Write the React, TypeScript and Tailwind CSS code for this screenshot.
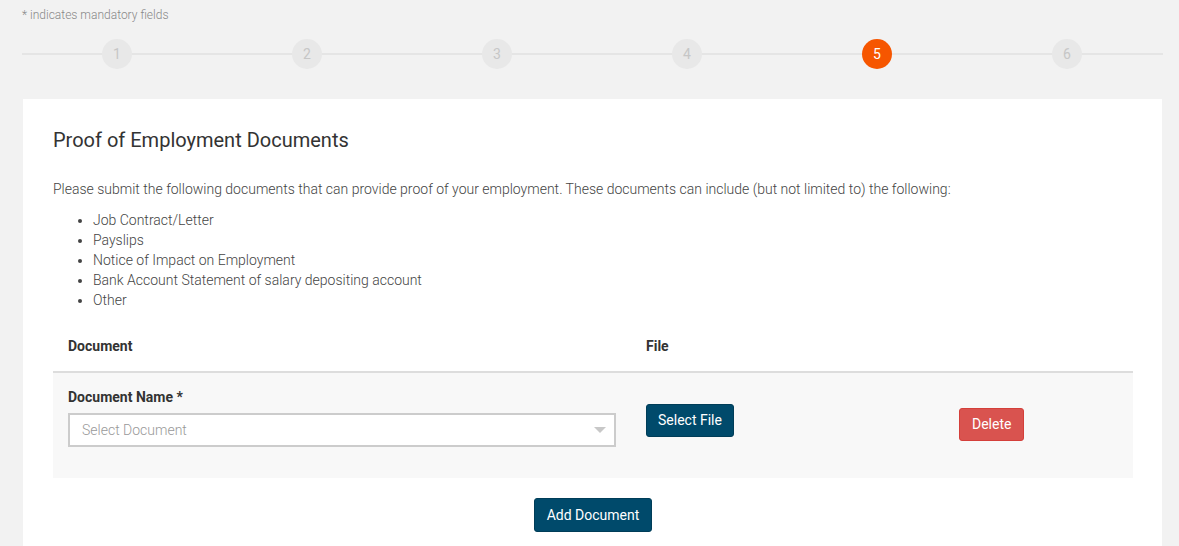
import React from "react";

const steps = [1, 2, 3, 4, 5, 6];
const items = [
  "Job Contract/Letter",
  "Payslips",
  "Notice of Impact on Employment",
  "Bank Account Statement of salary depositing account",
  "Other",
];

export default function App() {
  return (
    <div
      className="min-h-[546px] bg-[#f2f2f2] px-[22px] pt-[7px] text-[#555]"
      style={{ fontFamily: "Roboto, 'Noto Sans', sans-serif" }}
    >
      <div className="text-[12px] leading-[16px] text-[#888] font-light">* indicates mandatory fields</div>

      {/* stepper */}
      <div className="relative mt-[16px] h-[30px] w-[1141px]">
        <div className="absolute left-0 right-0 top-[14px] h-[2px] bg-[#e5e5e5]" />
        <div className="relative flex">
          {steps.map((s) => (
            <div key={s} className="flex w-[190px] justify-center">
              <div
                className={
                  s === 5
                    ? "flex h-[30px] w-[30px] items-center justify-center rounded-full bg-[#f65600] text-[14px] text-white"
                    : "flex h-[30px] w-[30px] items-center justify-center rounded-full bg-[#e8e8e8] text-[14px] text-[#c6c6c6]"
                }
              >
                {s}
              </div>
            </div>
          ))}
        </div>
      </div>

      {/* card */}
      <div className="ml-px mt-[30px] w-[1139px] bg-white px-[30px] pt-[29px] pb-[14px]">
        <h2 className="text-[20px] leading-[24px] text-[#333]">Proof of Employment Documents</h2>
        <p className="mt-[27px] text-[14px] leading-[20px] font-light text-[#444]">
          Please submit the following documents that can provide proof of your employment. These documents can include (but not limited to) the following:
        </p>
        <ul className="mt-[11px] list-disc pl-[40px] text-[14px] leading-[20px] font-light text-[#444]">
          {items.map((i) => (
            <li key={i}>{i}</li>
          ))}
        </ul>

        {/* table */}
        <div className="mt-[11px] w-[1080px] text-[14px]">
          <div className="flex border-b-2 border-[#ddd] pt-[15px] pb-[15px] font-bold leading-[20px] text-[#333]">
            <div className="w-[578px] px-[15px]">Document</div>
            <div className="w-[313px] px-[15px]">File</div>
            <div className="flex-1 px-[15px]" />
          </div>
          <div className="flex h-[105px] bg-[#f8f8f8]">
            <div className="w-[578px] px-[15px] pt-[14px]">
              <div className="font-bold leading-[20px] text-[#333]">Document Name *</div>
              <div className="mt-[6px] flex h-[34px] w-[548px] items-center justify-between border-2 border-[#ccc] bg-white pl-[12px] pr-[8px]">
                <span className="text-[14px] font-light text-[#999]">Select Document</span>
                <svg width="12" height="6" viewBox="0 0 12 6">
                  <path d="M0 0 L12 0 L6 6 Z" fill="#c8c8c8" />
                </svg>
              </div>
            </div>
            <div className="w-[313px] px-[15px] pt-[31px]">
              <button className="h-[33px] rounded-[3px] border border-[#003d58] bg-[#004a6b] px-[11px] text-[14px] text-white">
                Select File
              </button>
            </div>
            <div className="flex-1 px-[15px] pt-[35px]">
              <button className="h-[33px] rounded-[3px] border border-[#d43f3a] bg-[#d9534f] px-[12px] text-[14px] text-white">
                Delete
              </button>
            </div>
          </div>
          <div className="mt-[20px] flex justify-center">
            <button className="h-[34px] rounded-[3px] border border-[#003d58] bg-[#004a6b] px-[12px] text-[14px] text-white">
              Add Document
            </button>
          </div>
        </div>
      </div>
    </div>
  );
}
